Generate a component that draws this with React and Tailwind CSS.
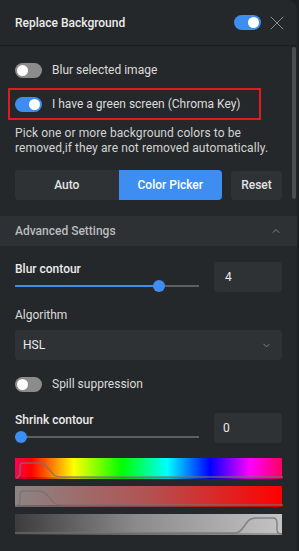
import React, { useState } from 'react';
import { X, ChevronUp, ChevronDown } from 'lucide-react';

function Toggle({ on, onClick }) {
  return (
    <button
      onClick={onClick}
      className={`relative h-[15px] w-[27px] shrink-0 rounded-full ${on ? 'bg-[#3d8ef0]' : 'bg-[#8c8c8c]'}`}
    >
      <span className={`absolute top-[2px] h-[11px] w-[11px] rounded-full bg-white ${on ? 'left-[14px]' : 'left-[2px]'}`} />
    </button>
  );
}

function Slider({ pct }) {
  return (
    <div className="relative h-[14px] w-[184px]">
      <div className="absolute left-0 right-0 top-[6px] h-[2px] bg-[#5c5f62]" />
      <div className="absolute left-0 top-[6px] h-[2px] bg-[#3d8ef0]" style={{ width: `${pct}%` }} />
      <div
        className="absolute top-[1px] h-[12px] w-[12px] -translate-x-1/2 rounded-full bg-[#3d8ef0]"
        style={{ left: `${pct}%` }}
      />
    </div>
  );
}

function ColorBar({ bg, path }) {
  return (
    <div className={`relative h-[21px] w-full ${bg}`}>
      <div className="absolute bottom-0 left-0 right-0 h-[2px] bg-black/20" />
      <svg className="absolute inset-0" width="268" height="21" viewBox="0 0 268 21">
        <path d={path} fill="none" stroke="rgba(115,115,115,0.8)" strokeWidth="1.5" />
      </svg>
    </div>
  );
}

export default function App() {
  const [enabled, setEnabled] = useState(true);
  const [blur, setBlur] = useState(false);
  const [chroma, setChroma] = useState(true);
  const [spill, setSpill] = useState(false);
  const [mode, setMode] = useState('picker');

  return (
    <div className="flex h-[551px] w-[299px] bg-[#1e2123]" style={{ fontFamily: 'Roboto, "Noto Sans", sans-serif' }}>
      <div className="relative flex h-full w-[297px] flex-col overflow-hidden rounded-tr-[9px] bg-[#25282a] text-[#e4e4e4]">
        <div className="flex h-[46px] shrink-0 items-center border-b border-[#1a1c1e] pl-[15px] pr-[8px]">
          <h1 className="flex-1 text-[12px] font-medium text-[#ececec]">Replace Background</h1>
          <Toggle on={enabled} onClick={() => setEnabled(!enabled)} />
          <X className="ml-[4px] h-[24px] w-[24px] text-[#8a8d90]" strokeWidth={1} />
        </div>

        <div className="absolute right-[1px] top-[47px] h-[152px] w-[4px] rounded-sm bg-[#4a4e52]" />

        <div className="flex flex-col">
          <div className="mt-[17px] flex h-[15px] items-center gap-[10px] pl-[15px]">
            <Toggle on={blur} onClick={() => setBlur(!blur)} />
            <span className="text-[12px] leading-[15px] text-[#dcdcdc]">Blur selected image</span>
          </div>

          <div className="ml-[8px] mt-[10px] flex h-[32px] w-[253px] items-center gap-[10px] border-2 border-[#e3191c] pl-[5px]">
            <Toggle on={chroma} onClick={() => setChroma(!chroma)} />
            <span className="text-[12px] leading-[15px] text-[#dcdcdc]">I have a green screen (Chroma Key)</span>
          </div>

          <p className="mt-[6px] px-[15px] text-[12px] leading-[15px] tracking-[0.1px] text-[#d4d4d4]">
            Pick one or more background colors to be removed,if they are not removed automatically.
          </p>

          <div className="mt-[14px] flex items-center px-[15px]">
            <div className="flex h-[30px] w-[207px] overflow-hidden rounded-[4px] bg-[#2f3235]">
              <button
                onClick={() => setMode('auto')}
                className={`flex-1 text-[12px] font-medium ${mode === 'auto' ? 'bg-[#3d8ef0] text-white' : 'text-[#e4e4e4]'}`}
              >
                Auto
              </button>
              <button
                onClick={() => setMode('picker')}
                className={`flex-1 text-[12px] font-medium ${mode === 'picker' ? 'bg-[#3d8ef0] text-white' : 'text-[#e4e4e4]'}`}
              >
                Color Picker
              </button>
            </div>
            <button className="ml-[9px] h-[29px] w-[51px] rounded-[4px] bg-[#2f3235] text-[12px] font-medium text-[#e4e4e4]">
              Reset
            </button>
          </div>

          <div className="mt-[16px] flex h-[30px] items-center bg-[#2e3134] pl-[15px] pr-[15px]">
            <span className="flex-1 text-[12px] font-medium text-[#b9bcbf]">Advanced Settings</span>
            <ChevronUp className="h-[12px] w-[12px] text-[#a0a3a6]" strokeWidth={1.5} />
          </div>

          <div className="flex flex-col px-[15px]">
            <div className="mt-[16px] flex items-start">
              <div className="flex w-[184px] flex-col">
                <span className="text-[12px] font-medium leading-[14px] text-[#ececec]">Blur contour</span>
                <div className="mt-[3px]">
                  <Slider pct={78} />
                </div>
              </div>
              <div className="ml-auto flex h-[30px] w-[68px] items-center rounded-[4px] bg-[#2f3235] pl-[11px] text-[12px] text-[#ececec]">
                4
              </div>
            </div>

            <span className="mt-[15px] text-[12px] leading-[14px] text-[#dcdcdc]">Algorithm</span>
            <div className="mt-[8px] flex h-[30px] items-center rounded-[4px] bg-[#2f3235] pl-[8px] pr-[10px]">
              <span className="flex-1 text-[12px] text-[#ececec]">HSL</span>
              <ChevronDown className="h-[11px] w-[11px] text-[#a0a3a6]" strokeWidth={1.5} />
            </div>

            <div className="mt-[17px] flex h-[15px] items-center gap-[10px]">
              <Toggle on={spill} onClick={() => setSpill(!spill)} />
              <span className="text-[12px] leading-[15px] text-[#dcdcdc]">Spill suppression</span>
            </div>

            <div className="mt-[21px] flex items-start">
              <div className="flex w-[184px] flex-col">
                <span className="text-[12px] font-medium leading-[14px] text-[#ececec]">Shrink contour</span>
                <div className="mt-[3px]">
                  <Slider pct={3} />
                </div>
              </div>
              <div className="ml-auto flex h-[30px] w-[68px] items-center rounded-[4px] bg-[#2f3235] pl-[9px] text-[12px] text-[#ececec]">
                0
              </div>
            </div>

            <div className="mt-[14px] flex flex-col gap-[7px]">
              <ColorBar
                bg="bg-[linear-gradient(to_right,#ff0050,#ff0000_6%,#ffff00_22%,#00ff00_40%,#00ffff_57%,#0000ff_73%,#ff00ff_88%,#ff0060)]"
                path="M1 20 Q5 19 5 15 L5 8 Q5 5 9 5 L24 5 Q29 5 33 10 L39 17 Q42 19 47 19 L268 19"
              />
              <ColorBar
                bg="bg-[linear-gradient(to_right,#8c8484,#b25252_50%,#ff0000)]"
                path="M1 20 Q5 19 5 15 L5 8 Q5 5 9 5 L24 5 Q29 5 33 10 L39 17 Q42 19 47 19 L268 19"
              />
              <ColorBar
                bg="bg-[linear-gradient(to_right,#3c3c3c,#8a8a8a_45%,#c4c4c4)]"
                path="M0 19 L219 19 Q224 19 227 15 L233 7 Q236 4 241 4 L258 4 Q262 4 262 9 L262 16 Q262 20 267 20"
              />
            </div>
          </div>
        </div>
      </div>
    </div>
  );
}
